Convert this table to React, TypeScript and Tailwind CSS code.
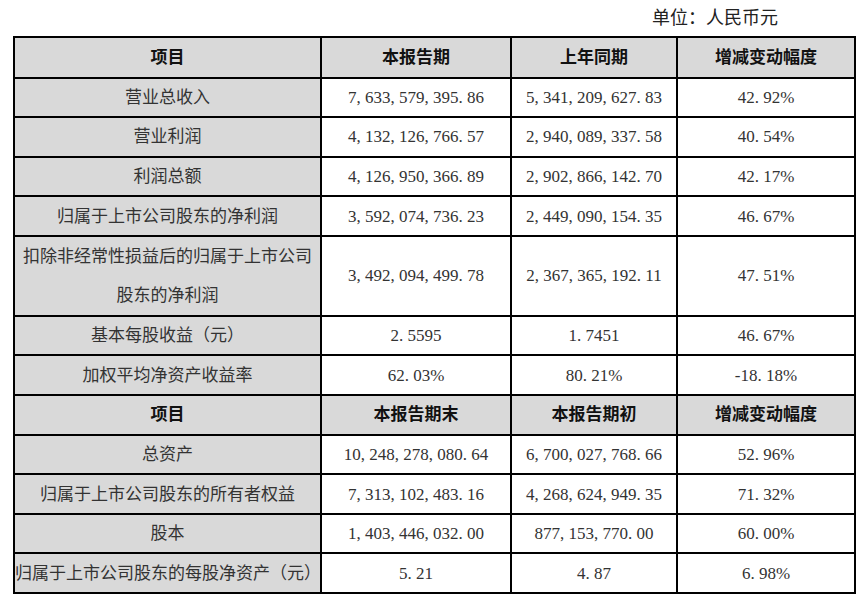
type Row = {
  label: string[];
  values: [string, string, string];
  head?: boolean;
};

const rows: Row[] = [
  { label: ["项目"], values: ["本报告期", "上年同期", "增减变动幅度"], head: true },
  { label: ["营业总收入"], values: ["7, 633, 579, 395. 86", "5, 341, 209, 627. 83", "42. 92%"] },
  { label: ["营业利润"], values: ["4, 132, 126, 766. 57", "2, 940, 089, 337. 58", "40. 54%"] },
  { label: ["利润总额"], values: ["4, 126, 950, 366. 89", "2, 902, 866, 142. 70", "42. 17%"] },
  { label: ["归属于上市公司股东的净利润"], values: ["3, 592, 074, 736. 23", "2, 449, 090, 154. 35", "46. 67%"] },
  {
    label: ["扣除非经常性损益后的归属于上市公司", "股东的净利润"],
    values: ["3, 492, 094, 499. 78", "2, 367, 365, 192. 11", "47. 51%"],
  },
  { label: ["基本每股收益（元）"], values: ["2. 5595", "1. 7451", "46. 67%"] },
  { label: ["加权平均净资产收益率"], values: ["62. 03%", "80. 21%", "-18. 18%"] },
  { label: ["项目"], values: ["本报告期末", "本报告期初", "增减变动幅度"], head: true },
  { label: ["总资产"], values: ["10, 248, 278, 080. 64", "6, 700, 027, 768. 66", "52. 96%"] },
  { label: ["归属于上市公司股东的所有者权益"], values: ["7, 313, 102, 483. 16", "4, 268, 624, 949. 35", "71. 32%"] },
  { label: ["股本"], values: ["1, 403, 446, 032. 00", "877, 153, 770. 00", "60. 00%"] },
  { label: ["归属于上市公司股东的每股净资产（元）"], values: ["5. 21", "4. 87", "6. 98%"] },
];

export default function App() {
  return (
    <div className="min-h-[602px] w-[861px] bg-white pl-[13px] font-['Liberation_Serif','Noto_Sans_CJK_SC',serif] text-[17px] text-[#333]">
      <div className="flex h-[36px] w-[841px] items-center justify-end pr-[76px] text-[18px] text-[#222]">
        单位：人民币元
      </div>
      <table className="w-[841px] table-fixed border-collapse border-2 border-black">
        <colgroup>
          <col className="w-[307px]" />
          <col className="w-[190px]" />
          <col className="w-[166px]" />
          <col className="w-[178px]" />
        </colgroup>
        <tbody>
          {rows.map((row, i) => {
            const twoLine = row.label.length > 1;
            return (
              <tr key={i} className={twoLine ? "h-[77.5px]" : i === 0 ? "h-[40.5px]" : "h-[39.6px]"}>
                <td
                  className={`whitespace-nowrap border-2 border-black bg-[#d9d9d9] p-0 text-center ${
                    row.head ? "font-bold text-[#111]" : ""
                  } ${twoLine ? "leading-[39px]" : "leading-none"}`}
                >
                  {row.label.map((line) => (
                    <div key={line}>{line}</div>
                  ))}
                </td>
                {row.values.map((v, j) => (
                  <td
                    key={j}
                    className={`whitespace-nowrap border-2 border-black p-0 text-center leading-none ${
                      row.head ? "bg-[#d9d9d9] font-bold text-[#111]" : "bg-white"
                    }`}
                  >
                    {v}
                  </td>
                ))}
              </tr>
            );
          })}
        </tbody>
      </table>
    </div>
  );
}
